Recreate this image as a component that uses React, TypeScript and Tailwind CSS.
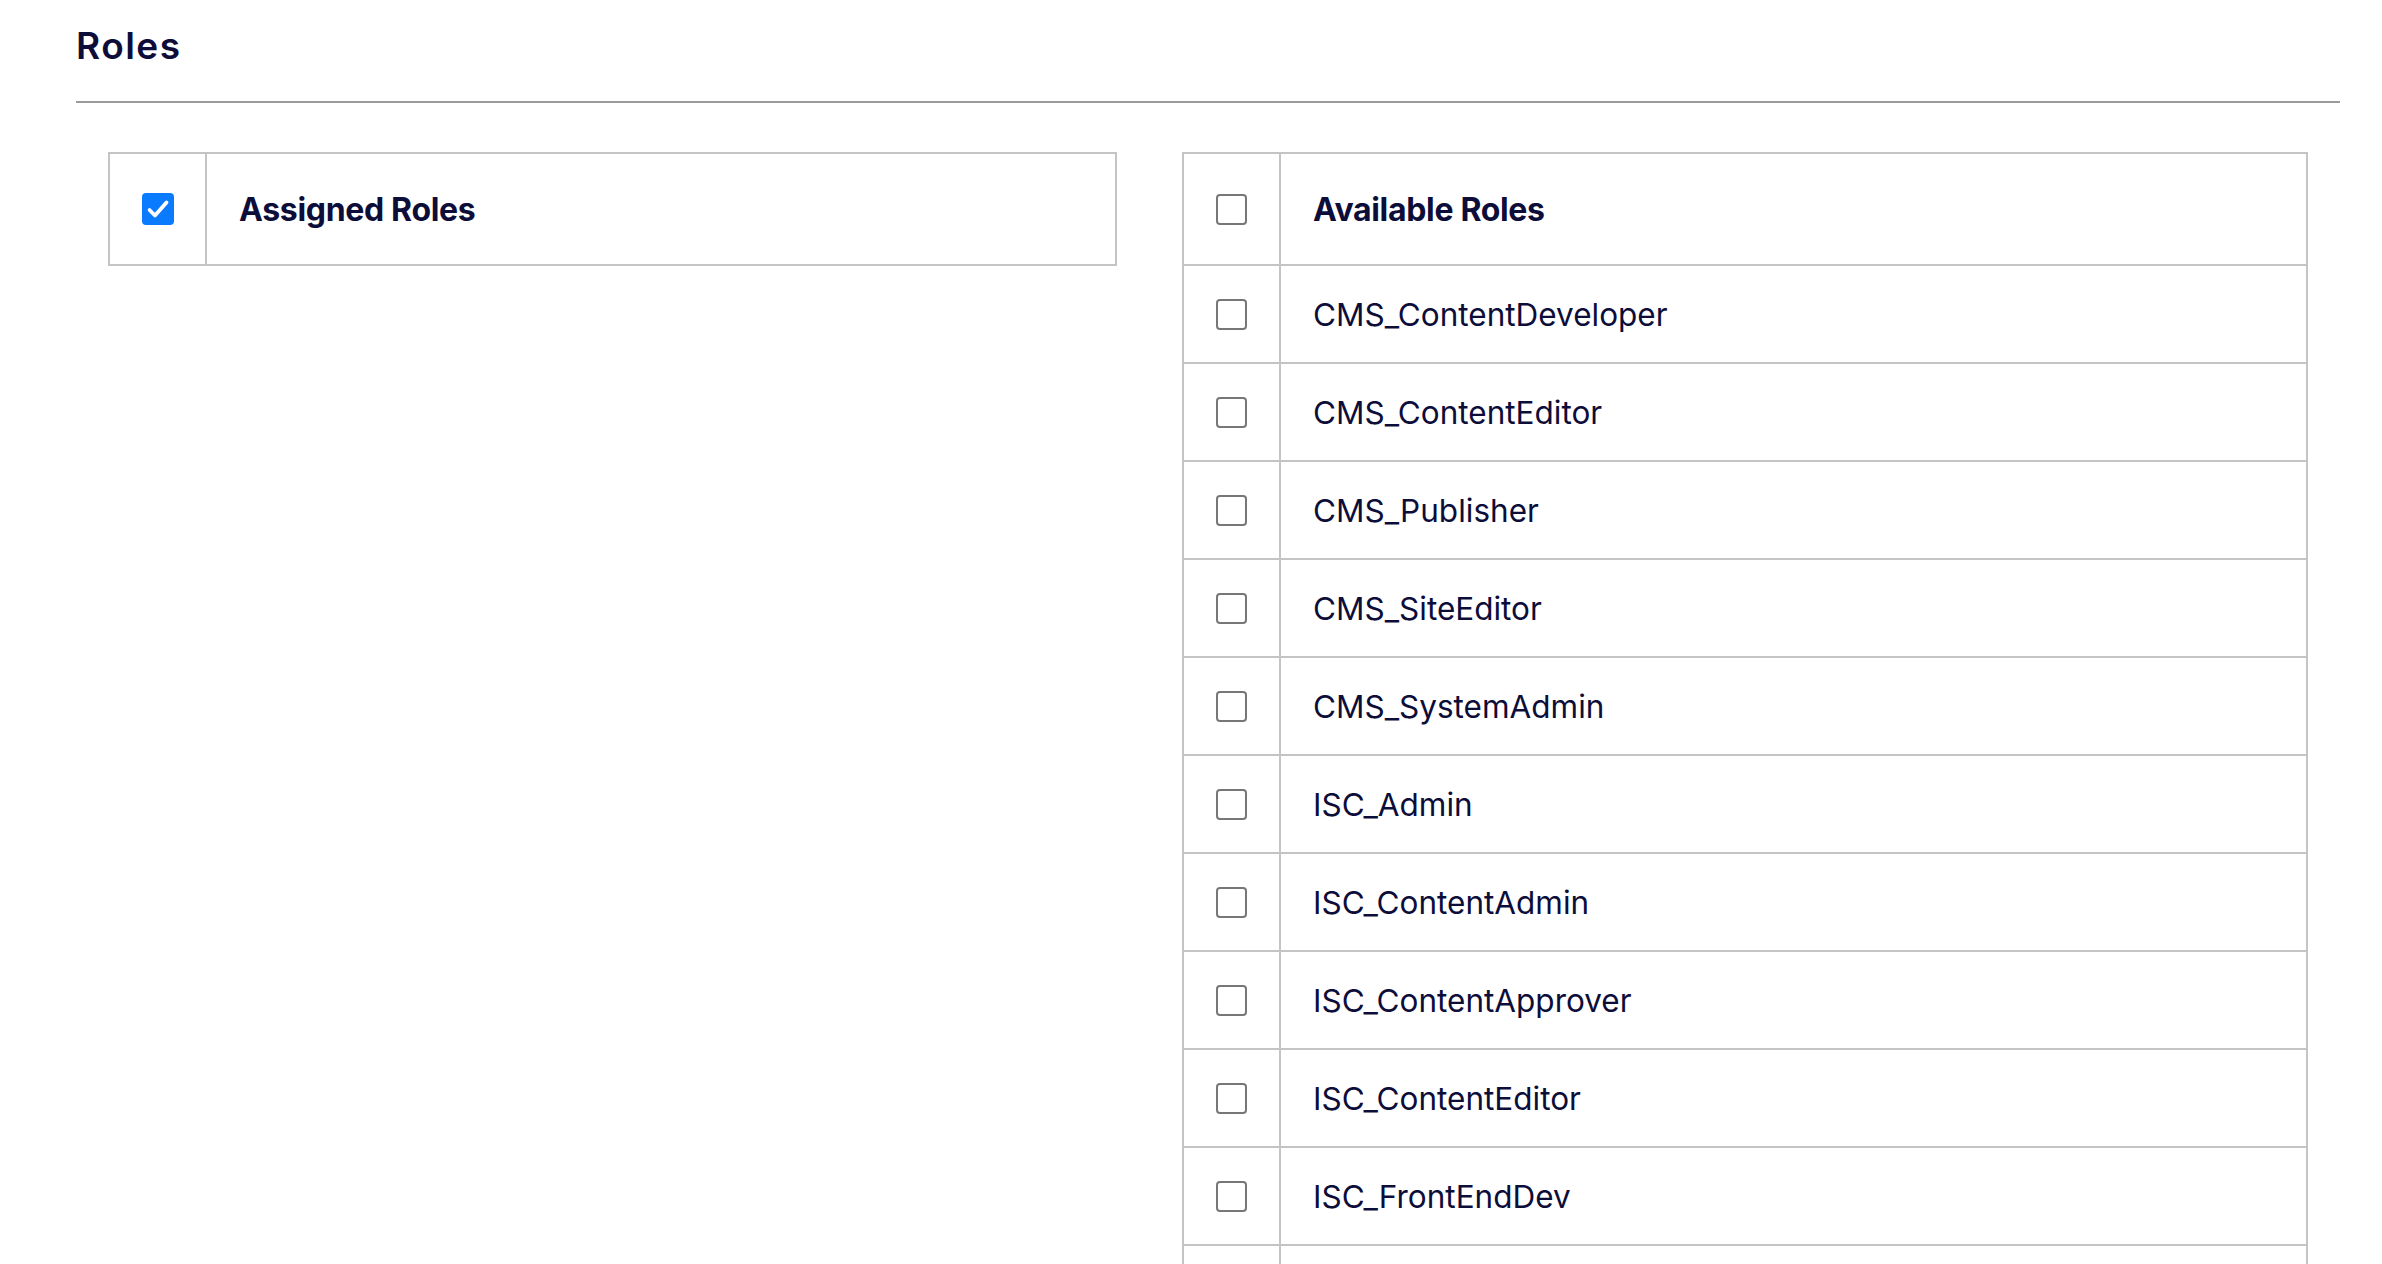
import React from "react";

const roles = [
  "CMS_ContentDeveloper",
  "CMS_ContentEditor",
  "CMS_Publisher",
  "CMS_SiteEditor",
  "CMS_SystemAdmin",
  "ISC_Admin",
  "ISC_ContentAdmin",
  "ISC_ContentApprover",
  "ISC_ContentEditor",
  "ISC_FrontEndDev",
];

function Box({ checked }: { checked?: boolean }) {
  if (checked) {
    return (
      <span className="flex h-[32px] w-[32px] items-center justify-center rounded-[4px] bg-[#0a7aff]">
        <svg width="24" height="24" viewBox="0 0 24 24" fill="none">
          <path d="M3.5 13l5.5 5.5L20.5 5.5" stroke="#fff" strokeWidth="3.8" strokeLinecap="round" strokeLinejoin="round" />
        </svg>
      </span>
    );
  }
  return <span className="block h-[31px] w-[31px] rounded-[4px] border-2 border-[#777]" />;
}

function Row({ label, head, checked }: { label: string; head?: boolean; checked?: boolean }) {
  return (
    <div className={`flex border-b-2 border-[#c4c4c4] ${head ? "h-[112px]" : "h-[98px]"}`}>
      <div className="flex w-[97px] shrink-0 items-center justify-center border-r-2 border-[#c4c4c4]">
        <Box checked={checked} />
      </div>
      <div
        className={`flex items-center pl-[32px] pt-[2px] text-[#0d0d3a] ${head ? "text-[32px] font-bold tracking-[-0.01em]" : "text-[31.5px] font-normal"}`}
      >
        {label}
      </div>
    </div>
  );
}

export default function App() {
  return (
    <section className="h-screen overflow-hidden bg-white px-[76px] pt-[27px] pr-[42px] font-['Inter',sans-serif]">
      <h1 className="text-[37px] font-semibold leading-none tracking-[0.04em] text-[#0d0d3a]">Roles</h1>
      <div className="mt-[37px] h-[2px] bg-[#9b9b9b]" />
      <div className="mt-[49px] flex items-start gap-[65px] px-[32px]">
        {/* assigned */}
        <div className="w-[1009px] border-x-2 border-t-2 border-[#c4c4c4]">
          <Row label="Assigned Roles" head checked />
        </div>
        {/* available */}
        <div className="flex-1 border-x-2 border-t-2 border-[#c4c4c4]">
          <Row label="Available Roles" head />
          {roles.map((r) => (
            <Row key={r} label={r} />
          ))}
          <div className="flex h-[98px]">
            <div className="w-[97px] shrink-0 border-r-2 border-[#c4c4c4]" />
          </div>
        </div>
      </div>
    </section>
  );
}
